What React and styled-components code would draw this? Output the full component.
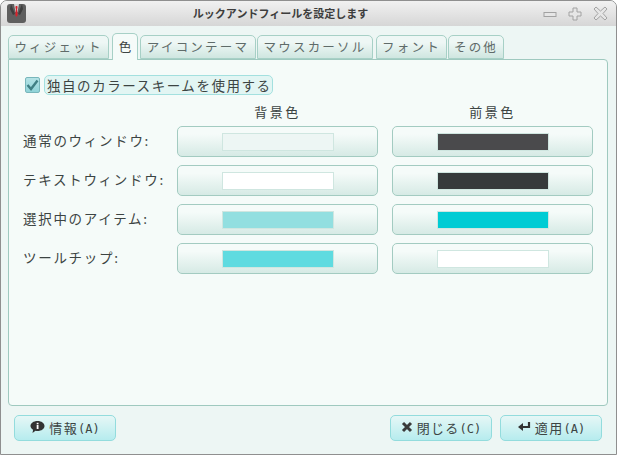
import React from "react";
import styled, { createGlobalStyle } from "styled-components";

const Global = createGlobalStyle`
  html, body {
    margin: 0;
    padding: 0;
    background: #ffffff;
  }
  * {
    box-sizing: border-box;
  }
`;

const fontStack = `"Noto Sans CJK JP", "Noto Sans CJK SC", sans-serif`;

const Window = styled.div`
  width: 617px;
  height: 455px;
  display: flex;
  flex-direction: column;
  background: #edf6f4;
  border: 1px solid #8f8f8f;
  border-radius: 7px 7px 0 0;
  overflow: hidden;
  font-family: ${fontStack};
  color: #3c4443;
`;

const TitleBar = styled.div`
  height: 25px;
  flex: none;
  display: flex;
  align-items: center;
  padding: 0 8px 0 5px;
  background: linear-gradient(#f1f1f1, #d6d6d6);
`;

const AppIcon = styled.svg`
  width: 21px;
  height: 21px;
  flex: none;
`;

const Title = styled.div`
  flex: 1;
  text-align: center;
  font-size: 11px;
  font-weight: 700;
  color: #3d3d3d;
  padding: 0 9px 2px 0;
`;

const WinControls = styled.div`
  display: flex;
  align-items: center;
  gap: 11px;
`;

const Body = styled.div`
  flex: 1;
  display: flex;
  flex-direction: column;
  padding: 7px 8px 0 7px;
`;

const TabRow = styled.div`
  display: flex;
  align-items: flex-end;
  height: 26px;
  position: relative;
  z-index: 1;
`;

const Tab = styled.div`
  width: ${(p) => p.$w}px;
  height: ${(p) => (p.$active ? 27 : 24)}px;
  margin-right: ${(p) => p.$gap}px;
  margin-bottom: ${(p) => (p.$active ? -1 : 0)}px;
  padding-bottom: 2px;
  display: flex;
  align-items: center;
  justify-content: center;
  font-size: 12.5px;
  letter-spacing: ${(p) => (p.$active ? 0 : 2.2)}px;
  color: ${(p) => (p.$active ? "#3c4443" : "#5f6b69")};
  background: ${(p) =>
    p.$active ? "#f5fbf9" : "linear-gradient(#eef7f5 30%, #cfe6e0)"};
  border: 1px solid #a7d0c6;
  border-bottom: ${(p) => (p.$active ? "none" : "1px solid #a7d0c6")};
  border-radius: 5px 5px 0 0;
`;

const Panel = styled.div`
  height: 347px;
  flex: none;
  background: #f5fbf9;
  border: 1px solid #9fc9bf;
  border-radius: 0 4px 4px 4px;
  padding: 15px 14px 0 14px;
`;

const CheckRow = styled.div`
  display: flex;
  align-items: center;
  gap: 4px;
  padding-left: 2px;
`;

const CheckBox = styled.div`
  width: 15px;
  height: 16px;
  display: flex;
  align-items: center;
  justify-content: center;
  background: linear-gradient(#b5e3e6, #8fd3d8);
  border: 1px solid #78b6bb;
  border-radius: 2px;
`;

const CheckLabel = styled.div`
  width: 229px;
  height: 20px;
  display: flex;
  align-items: center;
  padding-left: 2px;
  font-size: 13.5px;
  letter-spacing: 1.55px;
  white-space: nowrap;
  background: #e2f5f3;
  border: 1px solid #a3e0df;
  border-radius: 5px;
`;

const ColorGrid = styled.div`
  display: grid;
  grid-template-columns: 140px 201px 201px;
  column-gap: 14px;
  row-gap: 8px;
  margin-top: 4px;
`;

const ColHead = styled.div`
  height: 24px;
  margin-bottom: -5px;
  display: flex;
  align-items: center;
  justify-content: center;
  font-size: 13px;
  letter-spacing: 2.5px;
`;

const RowLabel = styled.div`
  display: flex;
  align-items: center;
  padding-bottom: 3px;
  font-size: 13.5px;
  letter-spacing: 1.7px;
  white-space: nowrap;
`;

const ColorButton = styled.div`
  width: 201px;
  height: 31px;
  display: flex;
  align-items: center;
  justify-content: center;
  background: linear-gradient(#f5fbf9 25%, #d6eae5);
  border: 1px solid #a3cbc1;
  border-radius: 5px;
`;

const Swatch = styled.div`
  width: 112px;
  height: 18px;
  background: ${(p) => p.$color};
  border: 1px solid #cfe6e0;
`;

const Footer = styled.div`
  display: flex;
  align-items: center;
  justify-content: space-between;
  padding: 9px 6px 0 6px;
`;

const FooterRight = styled.div`
  display: flex;
  gap: 8px;
`;

const ActionButton = styled.div`
  width: ${(p) => p.$w}px;
  height: 26px;
  padding-bottom: 2px;
  display: flex;
  align-items: center;
  justify-content: center;
  gap: 4px;
  font-size: 13px;
  letter-spacing: 1.3px;
  background: linear-gradient(#e6f7f6, #b6ecee);
  border: 1px solid #93dcdd;
  border-radius: 5px;
`;

const Mono = styled.span`
  font-family: "DejaVu Sans Mono", monospace;
  font-size: 12px;
  letter-spacing: 0;
`;

const tabs = [
  ["ウィジェット", 101, 3],
  ["色", 26, 2, true],
  ["アイコンテーマ", 116, 1],
  ["マウスカーソル", 116, 3],
  ["フォント", 71, 1],
  ["その他", 56, 0],
];

const rows = [
  ["通常のウィンドウ:", "#edf6f4", "#4a4a4c"],
  ["テキストウィンドウ:", "#ffffff", "#363a3b"],
  ["選択中のアイテム:", "#92dfe0", "#00ccd4"],
  ["ツールチップ:", "#5fdbe0", "#ffffff"],
];

const App = () => (
  <>
    <Global />
    <Window>
      <TitleBar>
        <AppIcon viewBox="0 0 21 21">
          <rect x="1" y="1" width="19" height="19" rx="3" fill="#5f5f5f" />
          <path d="M8 1h5l-1.500 8h-2z" fill="#d8d8d8" />
          <path d="M5 1l4 10-2 1-3-6z M16 1l-4 10 2 1 3-6z" fill="#3e3e3e" />
          <path d="M9.700 3h1.600l.3 2-.5 1 .6 6-1.200 2-1.200-2 .6-6-.5-1z" fill="#d8202a" />
        </AppIcon>
        <Title>ルックアンドフィールを設定します</Title>
        <WinControls>
          <svg width="14" height="14" viewBox="0 0 14 14">
            <rect x="1" y="5.500" width="12" height="4" fill="#e6e6e6" stroke="#a2a2a2" />
          </svg>
          <svg width="14" height="14" viewBox="0 0 14 14">
            <path d="M5 1h4v4h4v4H9v4H5V9H1V5h4z" fill="#e6e6e6" stroke="#a2a2a2" />
          </svg>
          <svg width="15" height="15" viewBox="0 0 15 15">
            <path
              d="M3 1l4.500 4L12 1l2 2-4 4.500 4 4.500-2 2-4.500-4L3 14l-2-2 4-4.500L1 3z"
              fill="#e6e6e6"
              stroke="#a2a2a2"
            />
          </svg>
        </WinControls>
      </TitleBar>
      <Body>
        <TabRow>
          {tabs.map(([label, w, gap, active]) => (
            <Tab key={label} $w={w} $gap={gap} $active={active}>
              {label}
            </Tab>
          ))}
        </TabRow>
        <Panel>
          <CheckRow>
            <CheckBox>
              <svg width="13" height="12" viewBox="0 0 13 12">
                <path d="M1.500 6l3.500 4L11.500 1.500" fill="none" stroke="#3f7f84" strokeWidth="2.400" />
              </svg>
            </CheckBox>
            <CheckLabel>独自のカラースキームを使用する</CheckLabel>
          </CheckRow>
          <ColorGrid>
            <div />
            <ColHead>背景色</ColHead>
            <ColHead>前景色</ColHead>
            {rows.map(([label, bg, fg]) => (
              <React.Fragment key={label}>
                <RowLabel>{label}</RowLabel>
                <ColorButton>
                  <Swatch $color={bg} />
                </ColorButton>
                <ColorButton>
                  <Swatch $color={fg} />
                </ColorButton>
              </React.Fragment>
            ))}
          </ColorGrid>
        </Panel>
        <Footer>
          <ActionButton $w={102}>
            <svg width="15" height="14" viewBox="0 0 15 14">
              <path
                d="M7.500 1C11.500 1 14.500 3.200 14.500 6S11.500 11 7.500 11c-.7 0-1.300 0-2-.2L2.500 13l.6-3.200C1.500 8.900.5 7.500.5 6 .5 3.200 3.500 1 7.500 1z"
                fill="#333"
              />
              <rect x="6.700" y="5" width="1.800" height="4" fill="#fff" />
              <rect x="6.700" y="2.800" width="1.800" height="1.500" fill="#fff" />
            </svg>
            <span>情報<Mono>(A)</Mono></span>
          </ActionButton>
          <FooterRight>
            <ActionButton $w={102}>
              <svg width="12" height="12" viewBox="0 0 12 12">
                <path d="M2 2l8 8M10 2l-8 8" stroke="#3a3a3a" strokeWidth="3" fill="none" />
              </svg>
              <span>閉じる<Mono>(C)</Mono></span>
            </ActionButton>
            <ActionButton $w={102}>
              <svg width="14" height="12" viewBox="0 0 14 12">
                <path d="M12 1v5H5" fill="none" stroke="#333" strokeWidth="2.200" />
                <path d="M1 6l5-4v8z" fill="#333" />
              </svg>
              <span>適用<Mono>(A)</Mono></span>
            </ActionButton>
          </FooterRight>
        </Footer>
      </Body>
    </Window>
  </>
);

export default App;
